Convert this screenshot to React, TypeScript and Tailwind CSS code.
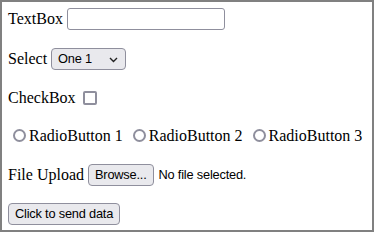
import React from "react";

const serif = "font-['Liberation_Serif',serif] text-[16px] text-black";
const ctl =
  "font-['Liberation_Sans',Arial,sans-serif] text-[12.8px] tracking-[-0.2px] text-black";

function Radio({ label }: { label: string }) {
  return (
    <span className="flex items-center">
      <span className="ml-[5px] mr-[3px] box-border h-[13px] w-[13px] rounded-full border-2 border-[#8f8f9d] bg-white" />
      <span>{label}</span>
    </span>
  );
}

export default function App() {
  return (
    <div
      className={`box-border flex h-[232px] w-[374px] flex-col border-2 border-[#808080] bg-white px-[6px] pt-[6px] ${serif}`}
    >
      <div className="flex h-[22px] items-center">
        <span>TextBox</span>
        <span className="ml-[4px] box-border h-[22px] w-[158px] rounded-[3px] border border-[#8f8f9d] bg-white" />
      </div>

      <div className="mt-[18px] flex h-[22px] items-center">
        <span>Select</span>
        <span
          className={`ml-[4px] box-border flex h-[22px] w-[75px] items-center justify-between rounded-[4px] border border-[#8f8f9d] bg-[#e9e9ed] pl-[6px] pr-[7px] ${ctl}`}
        >
          <span>One 1</span>
          <svg width="9" height="6" viewBox="0 0 9 6" className="mt-[1px]">
            <path d="M1 1 L4.5 4.5 L8 1" fill="none" stroke="#222" strokeWidth="1.4" />
          </svg>
        </span>
      </div>

      <div className="mt-[18px] flex h-[19px] items-center">
        <span>CheckBox</span>
        <span className="ml-[7px] box-border h-[14px] w-[14px] rounded-[2px] border-2 border-[#8f8f9d] bg-white" />
      </div>

      <div className="mt-[19px] flex h-[19px] items-center gap-[5px]">
        <Radio label="RadioButton 1" />
        <Radio label="RadioButton 2" />
        <Radio label="RadioButton 3" />
      </div>

      <div className="mt-[19px] flex h-[22px] items-center">
        <span>File Upload</span>
        <span
          className={`ml-[4px] box-border flex h-[22px] items-center rounded-[4px] border border-[#8f8f9d] bg-[#e9e9ed] px-[6px] ${ctl}`}
        >
          Browse...
        </span>
        <span className={`ml-[5px] ${ctl}`}>No file selected.</span>
      </div>

      <div className="mt-[17px] flex h-[22px] items-center">
        <span
          className={`box-border flex h-[22px] items-center rounded-[4px] border border-[#8f8f9d] bg-[#e9e9ed] px-[6px] ${ctl}`}
        >
          Click to send data
        </span>
      </div>
    </div>
  );
}
